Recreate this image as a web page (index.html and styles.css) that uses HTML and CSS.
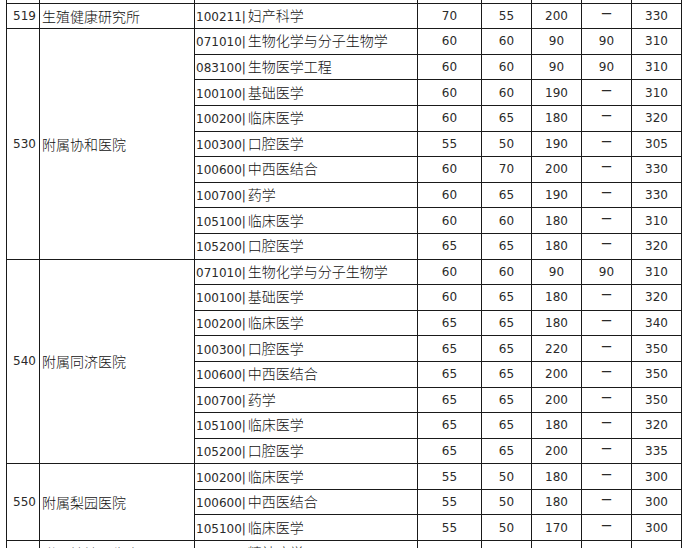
FILE: index.html
```html
<!DOCTYPE html>
<html lang="zh-CN">
<head>
<meta charset="utf-8">
<title>分数线</title>
<link rel="stylesheet" href="styles.css">
</head>
<body>
<div class="sheet">
<table class="grid">
<colgroup>
<col class="c-no"><col class="c-unit"><col class="c-major"><col class="c-n1"><col class="c-n2"><col class="c-n3"><col class="c-n4"><col class="c-n5">
</colgroup>
<tbody>
<tr class="prev"><td class="no"></td><td class="unit"></td><td class="major"></td><td class="num"></td><td class="num"></td><td class="num"></td><td class="num d4"></td><td class="num"></td></tr>
<tr><td class="no">519</td><td class="unit">生殖健康研究所</td><td class="major"><span class="code">100211|</span>妇产科学</td><td class="num">70</td><td class="num">55</td><td class="num">200</td><td class="num d4"><span class="dash">一</span></td><td class="num">330</td></tr>

<tr><td class="no" rowspan="9">530</td><td class="unit" rowspan="9">附属协和医院</td><td class="major"><span class="code">071010|</span>生物化学与分子生物学</td><td class="num">60</td><td class="num">60</td><td class="num">90</td><td class="num d4">90</td><td class="num">310</td></tr>
<tr><td class="major"><span class="code">083100|</span>生物医学工程</td><td class="num">60</td><td class="num">60</td><td class="num">90</td><td class="num d4">90</td><td class="num">310</td></tr>
<tr><td class="major"><span class="code">100100|</span>基础医学</td><td class="num">60</td><td class="num">60</td><td class="num">190</td><td class="num d4"><span class="dash">一</span></td><td class="num">310</td></tr>
<tr><td class="major"><span class="code">100200|</span>临床医学</td><td class="num">60</td><td class="num">65</td><td class="num">180</td><td class="num d4"><span class="dash">一</span></td><td class="num">320</td></tr>
<tr><td class="major"><span class="code">100300|</span>口腔医学</td><td class="num">55</td><td class="num">50</td><td class="num">190</td><td class="num d4"><span class="dash">一</span></td><td class="num">305</td></tr>
<tr><td class="major"><span class="code">100600|</span>中西医结合</td><td class="num">60</td><td class="num">70</td><td class="num">200</td><td class="num d4"><span class="dash">一</span></td><td class="num">330</td></tr>
<tr><td class="major"><span class="code">100700|</span>药学</td><td class="num">60</td><td class="num">65</td><td class="num">190</td><td class="num d4"><span class="dash">一</span></td><td class="num">330</td></tr>
<tr><td class="major"><span class="code">105100|</span>临床医学</td><td class="num">60</td><td class="num">60</td><td class="num">180</td><td class="num d4"><span class="dash">一</span></td><td class="num">310</td></tr>
<tr><td class="major"><span class="code">105200|</span>口腔医学</td><td class="num">65</td><td class="num">65</td><td class="num">180</td><td class="num d4"><span class="dash">一</span></td><td class="num">320</td></tr>

<tr><td class="no" rowspan="8">540</td><td class="unit" rowspan="8">附属同济医院</td><td class="major"><span class="code">071010|</span>生物化学与分子生物学</td><td class="num">60</td><td class="num">60</td><td class="num">90</td><td class="num d4">90</td><td class="num">310</td></tr>
<tr><td class="major"><span class="code">100100|</span>基础医学</td><td class="num">60</td><td class="num">65</td><td class="num">180</td><td class="num d4"><span class="dash">一</span></td><td class="num">320</td></tr>
<tr><td class="major"><span class="code">100200|</span>临床医学</td><td class="num">65</td><td class="num">65</td><td class="num">180</td><td class="num d4"><span class="dash">一</span></td><td class="num">340</td></tr>
<tr><td class="major"><span class="code">100300|</span>口腔医学</td><td class="num">65</td><td class="num">65</td><td class="num">220</td><td class="num d4"><span class="dash">一</span></td><td class="num">350</td></tr>
<tr><td class="major"><span class="code">100600|</span>中西医结合</td><td class="num">65</td><td class="num">65</td><td class="num">200</td><td class="num d4"><span class="dash">一</span></td><td class="num">350</td></tr>
<tr><td class="major"><span class="code">100700|</span>药学</td><td class="num">65</td><td class="num">65</td><td class="num">200</td><td class="num d4"><span class="dash">一</span></td><td class="num">350</td></tr>
<tr><td class="major"><span class="code">105100|</span>临床医学</td><td class="num">65</td><td class="num">65</td><td class="num">180</td><td class="num d4"><span class="dash">一</span></td><td class="num">320</td></tr>
<tr><td class="major"><span class="code">105200|</span>口腔医学</td><td class="num">65</td><td class="num">65</td><td class="num">200</td><td class="num d4"><span class="dash">一</span></td><td class="num">335</td></tr>

<tr><td class="no" rowspan="3">550</td><td class="unit" rowspan="3">附属梨园医院</td><td class="major"><span class="code">100200|</span>临床医学</td><td class="num">55</td><td class="num">50</td><td class="num">180</td><td class="num d4"><span class="dash">一</span></td><td class="num">300</td></tr>
<tr><td class="major"><span class="code">100600|</span>中西医结合</td><td class="num">55</td><td class="num">50</td><td class="num">180</td><td class="num d4"><span class="dash">一</span></td><td class="num">300</td></tr>
<tr><td class="major"><span class="code">105100|</span>临床医学</td><td class="num">55</td><td class="num">50</td><td class="num">170</td><td class="num d4"><span class="dash">一</span></td><td class="num">300</td></tr>

<tr class="last"><td class="no">560</td><td class="unit">附属精神卫生中心</td><td class="major"><span class="code">100204|</span>精神病学</td><td class="num">55</td><td class="num">50</td><td class="num">180</td><td class="num d4"><span class="dash">一</span></td><td class="num">300</td></tr>
</tbody>
</table>
</div>
</body>
</html>
```

FILE: styles.css
```css
html, body {
  margin: 0;
  padding: 0;
  background: #ffffff;
  overflow: hidden;
}

.sheet {
  margin-top: -23px;
  margin-left: 6px;
}

.grid {
  border-collapse: collapse;
  table-layout: fixed;
  width: 676px;
  color: #2a2a2a;
  font-family: "DejaVu Sans", "Noto Sans CJK SC", sans-serif;
  font-size: 12px;
}

.c-no { width: 33px; }
.c-unit { width: 155px; }
.c-major { width: 223px; }
.c-n1 { width: 64px; }
.c-n2, .c-n3, .c-n4, .c-n5 { width: 50px; }

.grid tr {
  height: 25.6px;
}

.grid td {
  border: 1px solid #1a1a1a;
  padding: 0;
  line-height: 16px;
  white-space: nowrap;
  overflow: hidden;
  vertical-align: middle;
}

.grid td.d4 {
  border-left-color: #7a7a7a;
}

.no {
  padding-left: 6px !important;
  text-align: left;
}

.unit {
  padding-left: 2px !important;
  font-family: "Noto Sans CJK SC", sans-serif;
  font-size: 14px;
  font-weight: 300;
  color: #111111;
}

.major {
  padding-left: 1px !important;
  font-family: "Noto Sans CJK SC", sans-serif;
  font-size: 14px;
  font-weight: 300;
  color: #111111;
}

.code {
  font-family: "DejaVu Sans", sans-serif;
  font-size: 12px;
  font-weight: normal;
  color: #2a2a2a;
  margin-right: 2px;
}

.num {
  text-align: center;
}

.dash {
  display: inline-block;
  font-family: "Noto Sans CJK SC", sans-serif;
  font-size: 10px;
  font-weight: 700;
  position: relative;
  top: -2px;
}
```
